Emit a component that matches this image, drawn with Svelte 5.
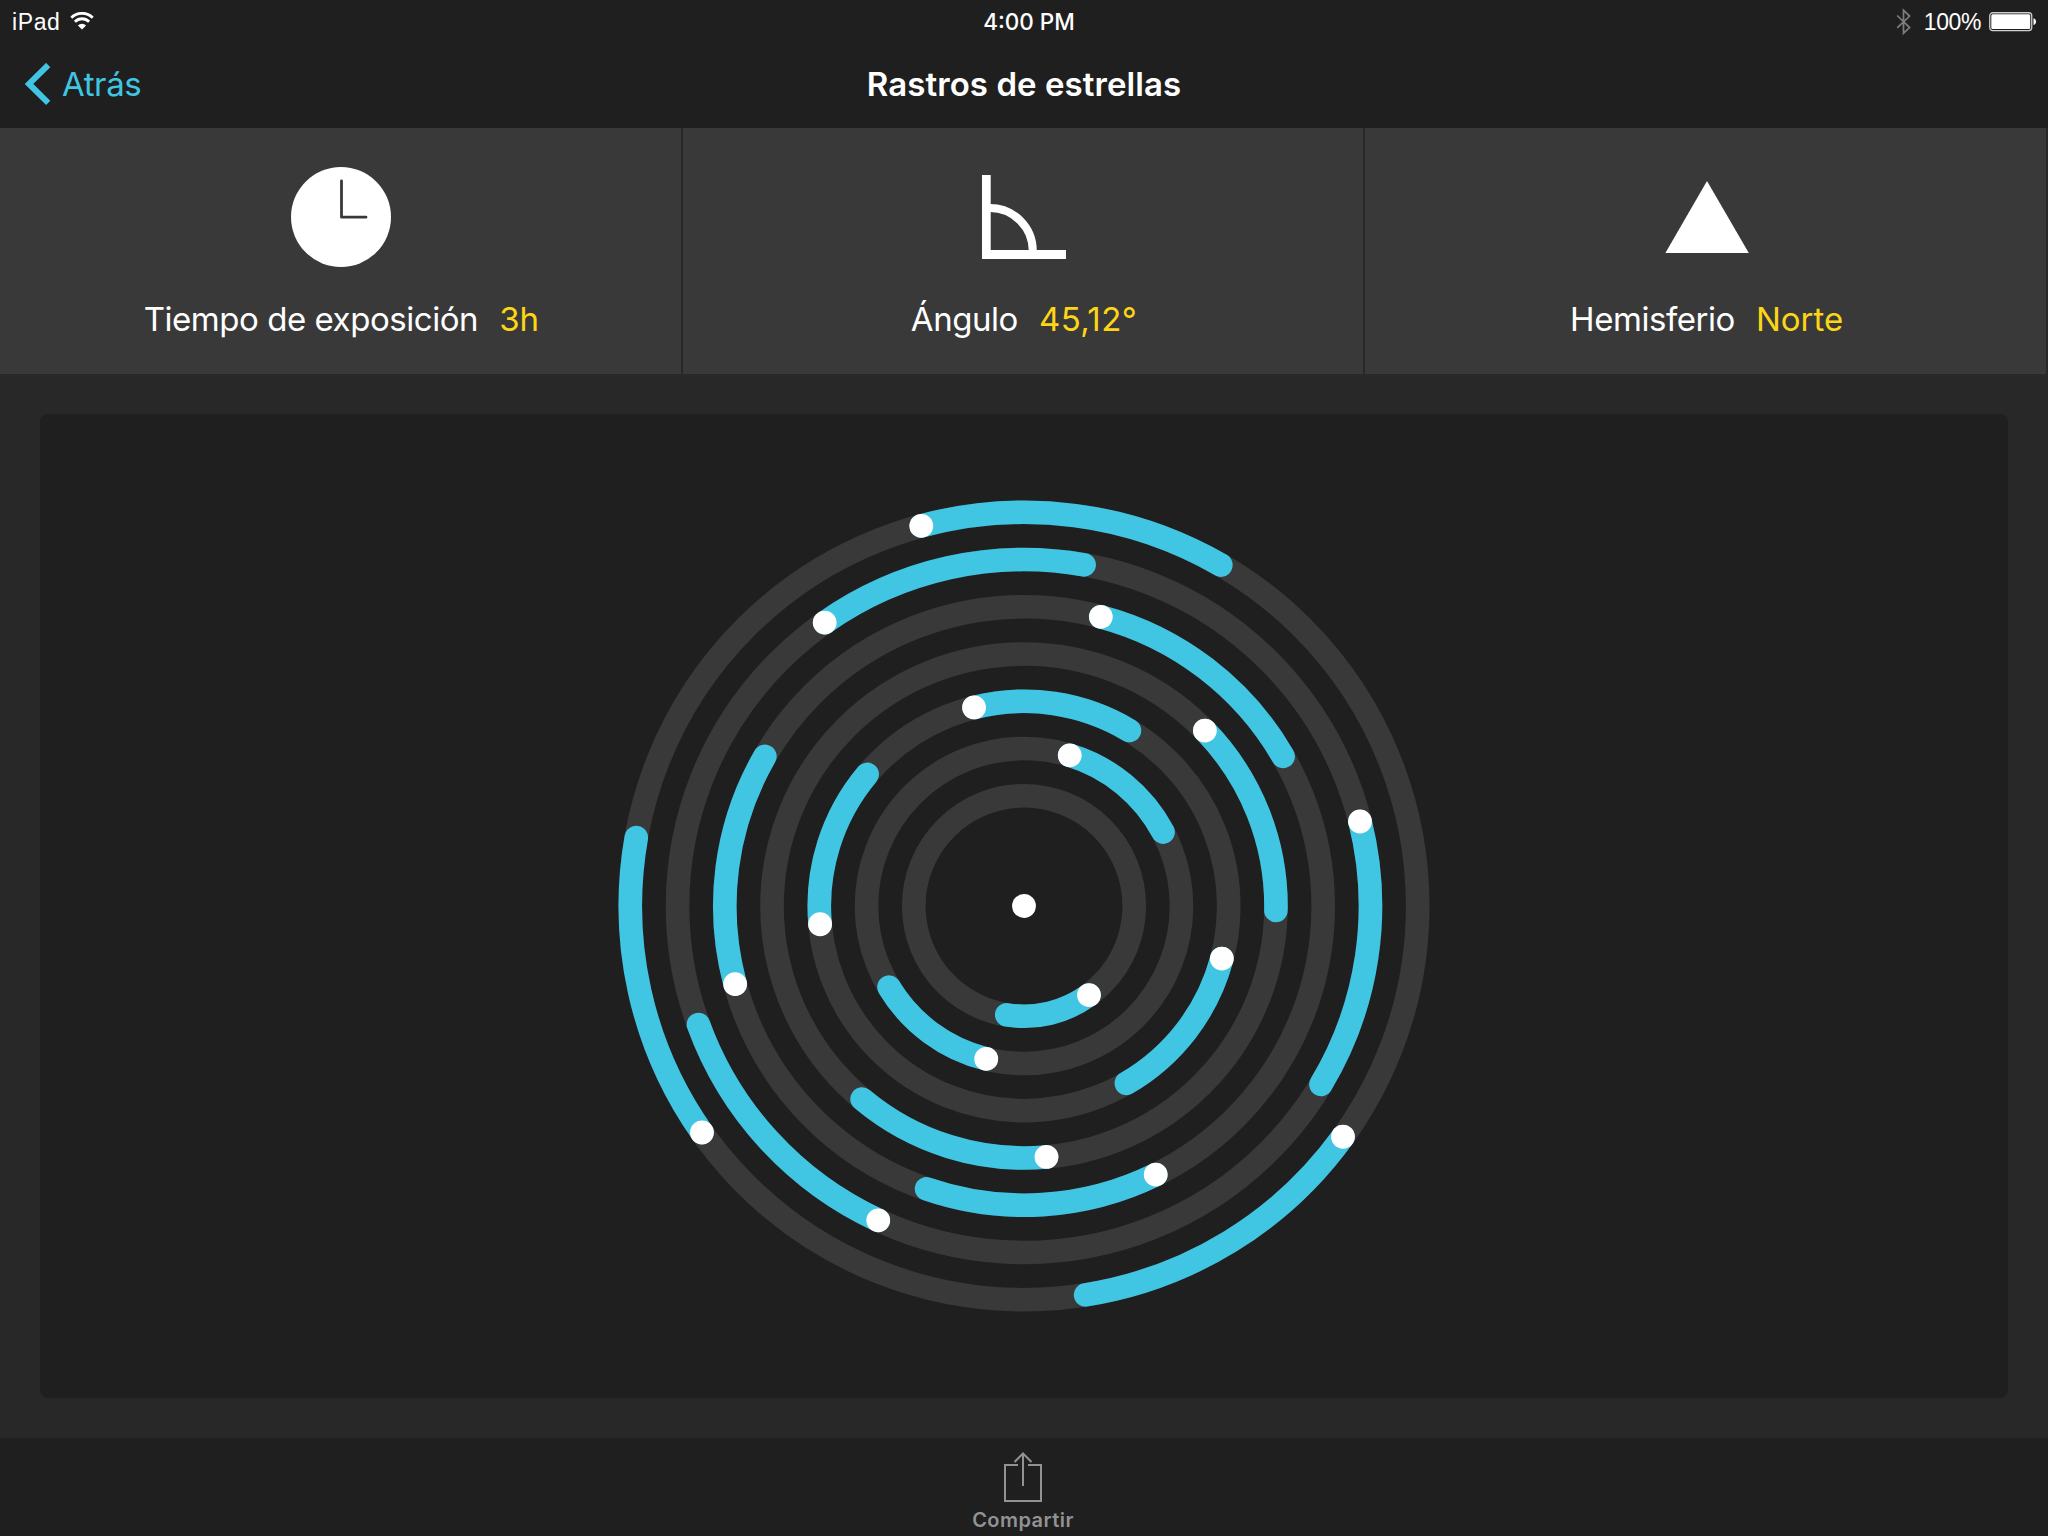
<script>
  // Angles are in degrees, clockwise from twelve o'clock; each trail ends at the listed angle.
  const sweep = 45.12;
  const step = 47.244;
  const rings = [
    { ends: [189] },
    { ends: [62, 239] },
    { ends: [31, 150, 310] },
    { ends: [91, 220] },
    { ends: [60, 199, 300] },
    { ends: [10, 121, 250] },
    { ends: [30, 171, 280] },
  ].map((ring, i) => ({ ...ring, r: 110.236 + i * step }));

  function point(r, deg) {
    const a = (deg * Math.PI) / 180;
    return [r * Math.sin(a), -r * Math.cos(a)];
  }

  const trails = rings.flatMap(({ r, ends }) =>
    ends.map((end) => {
      const [x, y] = point(r, end - sweep);
      const [ex, ey] = point(r, end);
      return { x, y, d: `M${x} ${y}A${r} ${r} 0 0 1 ${ex} ${ey}` };
    })
  );
</script>

<div class="screen">
  <header>
    <div class="status">
      <div class="carrier">
        <span class="ipad">iPad</span>
        <svg class="wifi" width="24" height="18" viewBox="0 0 24 18">
          <g fill="none" stroke="#fff" stroke-width="2.8">
            <path d="M1.3 5.7a15.2 15.2 0 0 1 21.4 0" />
            <path d="M4.9 9.7a10 10 0 0 1 14.2 0" />
          </g>
          <path d="M12 17.6l-4.1-4.1a5.8 5.8 0 0 1 8.2 0z" fill="#fff" />
        </svg>
      </div>
      <span class="time">4:00 PM</span>
      <div class="power">
        <svg class="bt" width="16" height="28" viewBox="0 0 16 28">
          <path d="M1.2 7.5L13.6 19.6 7.5 25.2V2.3l6.1 5.8L1.2 19.8" fill="none" stroke="#7d7d7d" stroke-width="1.7" />
        </svg>
        <span class="pct">100%</span>
        <svg class="battery" width="48" height="20" viewBox="0 0 48 20">
          <rect x=".75" y=".75" width="42" height="17.8" rx="3" fill="none" stroke="#d0d0d0" stroke-width="1.3" />
          <rect x="2.3" y="2.3" width="38.9" height="14.7" rx="1.5" fill="#fff" />
          <path d="M44.5 6.3c3.4.8 3.4 6 0 6.8z" fill="#fff" />
        </svg>
      </div>
    </div>
    <div class="nav">
      <div class="back">
        <svg width="27" height="42" viewBox="0 0 27 42">
          <path d="M24.2 2L5 20.9l19.2 18.9" fill="none" stroke="#40c5e3" stroke-width="6" />
        </svg>
        <span>Atrás</span>
      </div>
      <h1>Rastros de estrellas</h1>
    </div>
  </header>

  <section class="stats">
    <div class="stat">
      <svg width="100" height="100" viewBox="0 0 100 100">
        <circle cx="50" cy="50" r="50" fill="#fff" />
        <path d="M50.5 13.8V50.2H75" fill="none" stroke="#393939" stroke-width="2.8" stroke-linecap="round" stroke-linejoin="round" />
      </svg>
      <p><span class="label">Tiempo de exposición</span><span class="value">3h</span></p>
    </div>
    <div class="stat">
      <svg width="100" height="100" viewBox="0 0 100 100">
        <path d="M8 8h8.7v75H92v9H8z" fill="#fff" />
        <path d="M16 41A42.8 43 0 0 1 58.8 84" fill="none" stroke="#fff" stroke-width="8" />
      </svg>
      <p><span class="label">Ángulo</span><span class="value degrees">45,12°</span></p>
    </div>
    <div class="stat">
      <svg width="100" height="100" viewBox="0 0 100 100">
        <path d="M50 14L91.8 86H8.4z" fill="#fff" />
      </svg>
      <p><span class="label">Hemisferio</span><span class="value">Norte</span></p>
    </div>
  </section>

  <main>
    <div class="panel">
      <svg width="820" height="820" viewBox="-410 -410 820 820">
        <g fill="none" stroke-width="23.62">
          {#each rings as ring}
            <circle r={ring.r} stroke="#393939" />
          {/each}
          {#each trails as t}
            <path d={t.d} stroke="#40c5e3" stroke-linecap="round" />
          {/each}
        </g>
        <g fill="#fff">
          {#each trails as t}
            <circle cx={t.x} cy={t.y} r="11.9" />
          {/each}
          <circle r="11.9" />
        </g>
      </svg>
    </div>
  </main>

  <footer>
    <svg width="40" height="52" viewBox="0 0 40 52">
      <g fill="none" stroke="#929292" stroke-width="2">
        <path d="M15 13H2v36h36V13H25" />
        <path d="M20 34V2M11.5 10L20 1.5 28.5 10" />
      </g>
    </svg>
    <span>Compartir</span>
  </footer>
</div>

<style>
  :global(body) { background: #282828; }
  .screen {
    width: 2048px;
    height: 1536px;
    display: flex;
    flex-direction: column;
    overflow: hidden;
    background: #282828;
    color: #fff;
    font-family: Inter, "Liberation Sans", sans-serif;
  }
  svg { display: block; flex: none; }
  span, h1 { white-space: nowrap; }
  header { height: 128px; background: #1f1f1f; }
  .status {
    height: 42px;
    display: grid;
    grid-template-columns: 1fr auto 1fr;
    align-items: center;
    font: 23px/42px "Liberation Sans", sans-serif;
  }
  .carrier { display: flex; align-items: center; gap: 10px; padding-left: 12px; }
  .ipad { letter-spacing: 0.6px; }
  .wifi { margin-bottom: 2px; }
  .time { font: 500 22.5px/42px Inter, sans-serif; padding-left: 10px; }
  .power { display: flex; align-items: center; justify-content: flex-end; padding-right: 11px; }
  .pct { margin: 1px 8px 0 12px; letter-spacing: -0.4px; }
  .nav {
    height: 84px;
    display: grid;
    grid-template-columns: 1fr auto 1fr;
    align-items: center;
  }
  .back {
    display: flex;
    align-items: center;
    gap: 11px;
    padding-left: 24px;
    color: #40c5e3;
    font-size: 33px;
    letter-spacing: -0.4px;
  }
  h1 { margin: 0; font-size: 33px; font-weight: 600; letter-spacing: 0.07px; line-height: 84px; }
  .stats { height: 246px; display: grid; grid-template-columns: repeat(3, 1fr); }
  .stat {
    display: flex;
    flex-direction: column;
    align-items: center;
    padding-top: 39px;
    background: #393939;
    box-shadow: inset -2px 0 #282828;
  }
  .stat p {
    margin: 32px 0 0;
    display: flex;
    gap: 21px;
    font-size: 33px;
    line-height: 40px;
  }
  .label { letter-spacing: -0.45px; }
  .value { color: #fcd615; }
  .degrees { letter-spacing: 0.4px; }
  main { flex: 1; padding: 40px; display: flex; }
  .panel {
    flex: 1;
    display: flex;
    align-items: center;
    justify-content: center;
    background: #1f1f1f;
    border-radius: 8px;
  }
  footer {
    height: 98px;
    display: flex;
    flex-direction: column;
    align-items: center;
    padding: 14px 2px 0 0;
    box-sizing: border-box;
    background: #1f1f1f;
    color: #929292;
    font-size: 20px;
    font-weight: 600;
    letter-spacing: 0.45px;
    line-height: 32px;
  }
</style>
